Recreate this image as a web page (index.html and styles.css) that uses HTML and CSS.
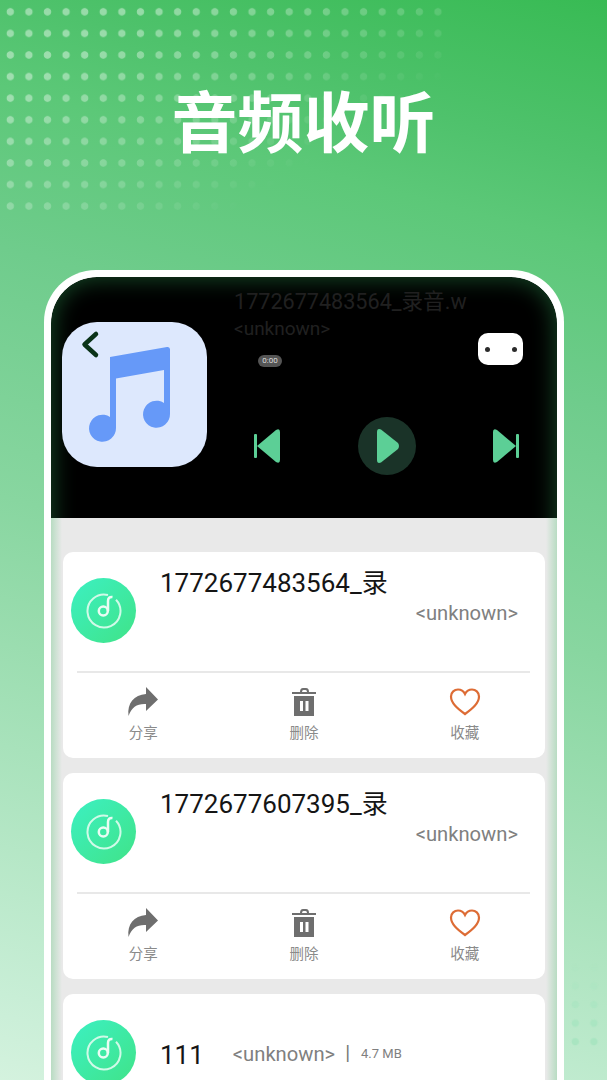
FILE: index.html
```html
<!DOCTYPE html>
<html lang="zh-CN">
<head>
    <meta charset="UTF-8">
    <meta name="viewport" content="width=device-width, initial-scale=1.0">
    <title>音频收听</title>
    <link rel="stylesheet" href="styles.css">
</head>
<body>
<div class="page">
    <div class="dots dots-top"></div>
    <div class="dots dots-bottom"></div>

    <h1 class="headline">音频收听</h1>

    <div class="phone">
        <div class="screen">
            <section class="player">
                <div class="art">
                    <svg width="145" height="145" viewBox="0 0 145 145">
                        <path fill="#6699f8" d="M48 35 L105 25 Q107.500 24.700 108 27 L108 92 A13.500 13.500 0 1 1 102 81 L102 48 L54 56.500 L54 106 A13.500 13.500 0 1 1 48 95 Z"/>
                    </svg>
                </div>
                <div class="player-info">
                    <div class="player-title">1772677483564_录音.w</div>
                    <div class="player-artist">&lt;unknown&gt;</div>
                    <div class="time-pill">0:00</div>
                    <div class="controls">
                        <svg class="ctrl" width="26" height="36" viewBox="0 0 26 36">
                            <rect x="0" y="6" width="3" height="24" rx="1" fill="#5ccf96"/>
                            <path fill="#5ccf96" d="M3 18 L22 2 Q26 0 26 4 L26 32 Q26 36 22 34 Z"/>
                        </svg>
                        <div class="play">
                            <svg width="24" height="36" viewBox="0 0 24 36">
                                <path fill="#5ccf96" d="M1 4 Q1 0 5 1.500 L22 15 Q24 18 22 21 L5 34.500 Q1 36 1 32 Z"/>
                            </svg>
                        </div>
                        <svg class="ctrl" width="26" height="36" viewBox="0 0 26 36">
                            <rect x="23" y="6" width="3" height="24" rx="1" fill="#5ccf96"/>
                            <path fill="#5ccf96" d="M23 18 L4 2 Q0 0 0 4 L0 32 Q0 36 4 34 Z"/>
                        </svg>
                    </div>
                </div>
                <svg class="back" width="20" height="30" viewBox="0 0 20 30">
                    <path d="M16 5 L4.500 15.500 L16 26" fill="none" stroke="#0a3318" stroke-width="4.500" stroke-linecap="round" stroke-linejoin="round"/>
                </svg>
                <div class="more"><span></span><span></span></div>
            </section>

            <section class="list">
                <article class="card">
                    <div class="card-top">
                        <div class="disc">
                            <svg width="38" height="38" viewBox="0 0 38 38">
                                <path d="M23 3 A16.500 16.500 0 1 0 31 7.700" fill="none" stroke="#d0fae8" stroke-width="2"/>
                                <circle cx="18.300" cy="19" r="4.500" fill="none" stroke="#eafcf4" stroke-width="2.500"/>
                                <path d="M23 19 L23 9 Q23 4.500 27.500 5" fill="none" stroke="#eafcf4" stroke-width="2.500"/>
                            </svg>
                        </div>
                        <div class="track">
                            <div class="track-name">1772677483564_录</div>
                            <div class="track-meta">&lt;unknown&gt;</div>
                        </div>
                    </div>
                    <div class="actions">
                        <div class="action">
                            <svg width="32" height="32" viewBox="0 0 32 32"><path fill="#6e6e6e" d="M19 1 L31 13.500 L19 25 L19 18 C10 17.500 5 21 1.500 30 C0 17 7 9 19 8 Z"/></svg>
                            <span>分享</span>
                        </div>
                        <div class="action">
                            <svg width="32" height="32" viewBox="0 0 32 32"><path fill="#6e6e6e" d="M4 6 L12 6 Q12 2 15 2 L18 2 Q21 2 21 6 L28 6 L28 8 L4 8 Z M14 6 L19 6 Q19 4 17.500 4 L15.500 4 Q14 4 14 6 Z M6 10 L26 10 L26 30 L6 30 Z"/><path fill="#fff" d="M12 15 h3 v10 h-3 Z M17.500 15 h3 v10 h-3 Z"/></svg>
                            <span>删除</span>
                        </div>
                        <div class="action">
                            <svg width="32" height="32" viewBox="0 0 32 32"><path fill="none" stroke="#dd6c35" stroke-width="2.200" d="M16 28 C8 22 2 17 2 10.500 C2 6 5.500 3.500 9 3.500 C12 3.500 14.500 5 16 8 C17.500 5 20 3.500 23 3.500 C26.500 3.500 30 6 30 10.500 C30 17 24 22 16 28 Z"/></svg>
                            <span>收藏</span>
                        </div>
                    </div>
                </article>

                <article class="card">
                    <div class="card-top">
                        <div class="disc">
                            <svg width="38" height="38" viewBox="0 0 38 38">
                                <path d="M23 3 A16.500 16.500 0 1 0 31 7.700" fill="none" stroke="#d0fae8" stroke-width="2"/>
                                <circle cx="18.300" cy="19" r="4.500" fill="none" stroke="#eafcf4" stroke-width="2.500"/>
                                <path d="M23 19 L23 9 Q23 4.500 27.500 5" fill="none" stroke="#eafcf4" stroke-width="2.500"/>
                            </svg>
                        </div>
                        <div class="track">
                            <div class="track-name">1772677607395_录</div>
                            <div class="track-meta">&lt;unknown&gt;</div>
                        </div>
                    </div>
                    <div class="actions">
                        <div class="action">
                            <svg width="32" height="32" viewBox="0 0 32 32"><path fill="#6e6e6e" d="M19 1 L31 13.500 L19 25 L19 18 C10 17.500 5 21 1.500 30 C0 17 7 9 19 8 Z"/></svg>
                            <span>分享</span>
                        </div>
                        <div class="action">
                            <svg width="32" height="32" viewBox="0 0 32 32"><path fill="#6e6e6e" d="M4 6 L12 6 Q12 2 15 2 L18 2 Q21 2 21 6 L28 6 L28 8 L4 8 Z M14 6 L19 6 Q19 4 17.500 4 L15.500 4 Q14 4 14 6 Z M6 10 L26 10 L26 30 L6 30 Z"/><path fill="#fff" d="M12 15 h3 v10 h-3 Z M17.500 15 h3 v10 h-3 Z"/></svg>
                            <span>删除</span>
                        </div>
                        <div class="action">
                            <svg width="32" height="32" viewBox="0 0 32 32"><path fill="none" stroke="#dd6c35" stroke-width="2.200" d="M16 28 C8 22 2 17 2 10.500 C2 6 5.500 3.500 9 3.500 C12 3.500 14.500 5 16 8 C17.500 5 20 3.500 23 3.500 C26.500 3.500 30 6 30 10.500 C30 17 24 22 16 28 Z"/></svg>
                            <span>收藏</span>
                        </div>
                    </div>
                </article>

                <article class="card">
                    <div class="card-top card-top-inline">
                        <div class="disc">
                            <svg width="38" height="38" viewBox="0 0 38 38">
                                <path d="M23 3 A16.500 16.500 0 1 0 31 7.700" fill="none" stroke="#d0fae8" stroke-width="2"/>
                                <circle cx="18.300" cy="19" r="4.500" fill="none" stroke="#eafcf4" stroke-width="2.500"/>
                                <path d="M23 19 L23 9 Q23 4.500 27.500 5" fill="none" stroke="#eafcf4" stroke-width="2.500"/>
                            </svg>
                        </div>
                        <div class="track-name">111</div>
                        <div class="track-meta">&lt;unknown&gt;</div>
                        <div class="track-sep">|</div>
                        <div class="track-size">4.7 MB</div>
                    </div>
                </article>
            </section>
        </div>
    </div>
</div>
</body>
</html>
```

FILE: styles.css
```css
* { box-sizing: border-box; }
html, body { margin: 0; padding: 0; }
body { font-family: Roboto, "Noto Sans CJK SC", sans-serif; }

.page {
    position: relative;
    width: 607px;
    height: 1080px;
    overflow: hidden;
    padding-top: 82px;
    background: linear-gradient(195deg, #38bb54 0%, #4fc26c 13%, #5cc878 20%, #6fcc8c 33%, #88d6a0 53%, #c8eed6 93%, #d4f2de 100%);
}

.dots { position: absolute; }
.dots-top {
    left: 1px;
    top: 1px;
    width: 446px;
    height: 216px;
    background-image: radial-gradient(circle, rgba(255,255,255,.42) 3.3px, transparent 4.1px);
    background-size: 18.6px 21.6px;
    -webkit-mask-image: linear-gradient(148deg, #000 20%, rgba(0,0,0,.5) 50%, transparent 72%);
    mask-image: linear-gradient(148deg, #000 20%, rgba(0,0,0,.5) 50%, transparent 72%);
}
.dots-bottom {
    left: 566px;
    top: 958px;
    width: 38px;
    height: 93px;
    background-image: radial-gradient(circle, #a9e5c1 3.3px, transparent 4.1px);
    background-size: 18.6px 18.6px;
    -webkit-mask-image: linear-gradient(to top, #000 25%, transparent 100%);
    mask-image: linear-gradient(to top, #000 25%, transparent 100%);
}

.headline {
    position: relative;
    margin: 0;
    height: 72px;
    font-family: "Noto Sans CJK SC", sans-serif;
    font-size: 66px;
    line-height: 72px;
    font-weight: 700;
    color: #fff;
    text-align: center;
}

.phone {
    position: relative;
    width: 520px;
    height: 810px;
    margin: 116px 0 0 44px;
    padding: 7px 7px 0;
    background: #fff;
    border-radius: 52px 52px 0 0;
}
.screen {
    height: 100%;
    border-radius: 46px 46px 0 0;
    overflow: hidden;
    display: flex;
    flex-direction: column;
}

.player {
    position: relative;
    flex: none;
    height: 241px;
    display: flex;
    background: #000;
    padding: 45px 0 0 11px;
    overflow: hidden;
    border-radius: 46px 46px 0 0;
}
.player::before {
    content: "";
    position: absolute;
    inset: 0 0 -40px 0;
    border-radius: 46px 46px 0 0;
    box-shadow: inset 0 0 22px 2px rgba(50,170,90,.42);
}
.art {
    position: relative;
    width: 145px;
    height: 145px;
    border-radius: 35px;
    background: #dde8fd;
    flex: none;
}
.back { position: absolute; left: 29px; top: 52px; }
.more {
    position: absolute;
    left: 427px;
    top: 56px;
    width: 45px;
    height: 32px;
    border-radius: 10px;
    background: #fff;
    display: flex;
    justify-content: space-between;
    align-items: center;
    padding: 0 6.500px;
}
.more span { width: 5px; height: 5px; border-radius: 50%; background: #2b2b2b; }

.player-info { position: relative; width: 310px; margin-left: 27px; margin-top: -33px; }
.player-title { font-size: 21.600px; line-height: 26px; color: #202020; white-space: nowrap; }
.player-artist { font-size: 19px; line-height: 22px; margin-top: 3px; color: #202020; }
.time-pill {
    width: 24px;
    height: 12px;
    margin: 15px 0 0 24px;
    border-radius: 6px;
    background: #555;
    color: #ddd;
    font-size: 8px;
    line-height: 12px;
    text-align: center;
}
.controls {
    display: flex;
    align-items: center;
    width: 265px;
    margin: 50px 0 0 20px;
    justify-content: space-between;
}
.play {
    width: 58px;
    height: 58px;
    border-radius: 50%;
    background: #1a3328;
    display: flex;
    align-items: center;
    justify-content: center;
    padding-left: 2px;
}

.list {
    flex: 1;
    padding: 34px 12px 0 12px;
    display: flex;
    flex-direction: column;
    gap: 15px;
    background: linear-gradient(to right, #b8dcc2, #e9e9e9 11px, #e9e9e9 calc(100% - 11px), #b8dcc2);
}
.card { height: 206px; background: #fff; border-radius: 10px; flex: none; }
.card-top {
    display: flex;
    height: 120px;
    padding: 26px 14px 0 8px;
}
.disc {
    width: 65px;
    height: 65px;
    flex: none;
    border-radius: 50%;
    background: linear-gradient(135deg, #3cf0c2, #40e388);
    display: flex;
    align-items: center;
    justify-content: center;
}
.track { flex: 1; margin: -14px 13px 0 24px; }
.track-name { font-size: 26px; line-height: 38px; color: #151515; white-space: nowrap; }
.track-meta { font-size: 20.200px; line-height: 26px; color: #808080; text-align: right; margin-top: -2px; }

.card-top-inline { align-items: flex-start; }
.card-top-inline .track-name { margin: 16px 0 0 24px; }
.card-top-inline .track-meta { margin: 21px 0 0 29px; }
.track-sep { font-size: 20px; line-height: 26px; margin: 20px 0 0 10px; color: #777; }
.track-size { font-size: 13px; line-height: 26px; margin: 21px 0 0 11px; color: #808080; }

.actions {
    display: grid;
    grid-template-columns: repeat(3, 1fr);
    position: relative;
    height: 86px;
    padding-top: 14px;
}
.actions::before {
    content: "";
    position: absolute;
    left: 14px;
    right: 15px;
    top: -1px;
    height: 2px;
    background: #e8e8e8;
}
.action { display: flex; flex-direction: column; align-items: center; }
.action span { font-size: 14.500px; line-height: 20px; margin-top: 6px; color: #8a8a8a; }
```
